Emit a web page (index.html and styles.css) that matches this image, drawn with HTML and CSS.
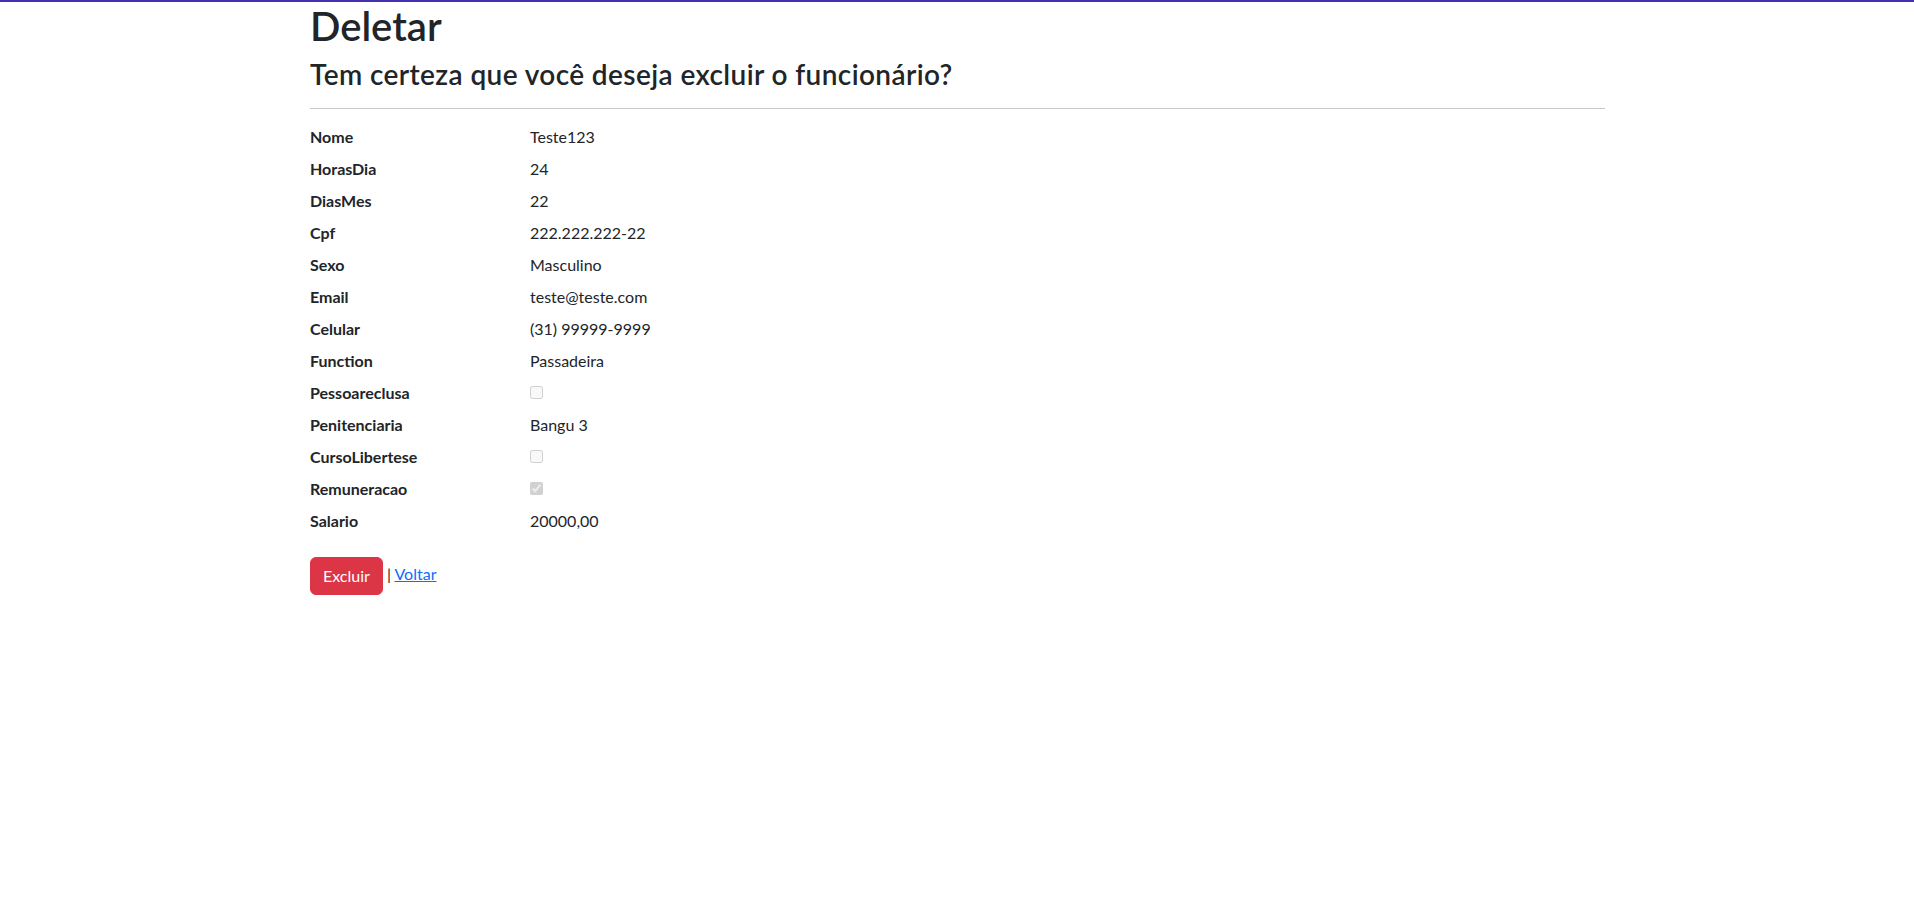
FILE: index.html
```html
<!DOCTYPE html>
<html lang="pt-br">
<head>
<meta charset="utf-8">
<title>Deletar</title>
<link rel="stylesheet" href="styles.css">
</head>
<body>
<div class="topline"></div>
<div class="container">
  <main class="main">
    <h1 class="title">Deletar</h1>
    <h3 class="subtitle">Tem certeza que você deseja excluir o funcionário?</h3>
    <div>
      <hr class="divider">
      <dl class="details">
        <dt>Nome</dt><dd>Teste123</dd>
        <dt>HorasDia</dt><dd>24</dd>
        <dt>DiasMes</dt><dd>22</dd>
        <dt>Cpf</dt><dd>222.222.222-22</dd>
        <dt>Sexo</dt><dd>Masculino</dd>
        <dt>Email</dt><dd>teste@teste.com</dd>
        <dt>Celular</dt><dd>(31) 99999-9999</dd>
        <dt>Function</dt><dd>Passadeira</dd>
        <dt>Pessoareclusa</dt><dd><input class="check-box" type="checkbox" disabled></dd>
        <dt>Penitenciaria</dt><dd>Bangu 3</dd>
        <dt>CursoLibertese</dt><dd><input class="check-box" type="checkbox" disabled></dd>
        <dt>Remuneracao</dt><dd><input class="check-box" type="checkbox" disabled checked></dd>
        <dt>Salario</dt><dd>20000,00</dd>
      </dl>
      <form class="actions">
        <button type="button" class="btn-danger">Excluir</button> | <a href="#" class="link">Voltar</a>
      </form>
    </div>
  </main>
</div>
</body>
</html>
```
FILE: styles.css
```css
* { box-sizing: border-box; }
html { font-size: 16px; }
body {
  margin: 0;
  font-family: Lato, "Noto Sans", "Liberation Sans", sans-serif;
  font-size: 16px;
  line-height: 1.5;
  color: #212529;
  background: #fff;
}
.topline {
  height: 2px;
  background: #4531b4;
}
.container {
  max-width: 1320px;
  margin: 0 auto;
  padding: 0 12px 0 13px;
}
.main { padding-bottom: 16px; }
.title {
  margin: 0 0 8px;
  font-size: 40px;
  font-weight: 600;
  line-height: 1.2;
}
.subtitle {
  margin: 0 0 8px;
  font-size: 28px;
  font-weight: 600;
  line-height: 1.2;
  letter-spacing: 0.4px;
}
.divider {
  margin: 16px 0;
  border: 0;
  border-top: 1px solid #c8c8c8;
  height: 0;
}
.details {
  display: grid;
  grid-template-columns: 220px 1fr;
  margin: 0 0 16px;
}
.details dt {
  font-weight: 700;
  margin: 0 0 8px;
}
.details dd {
  margin: 0 0 8px;
  display: flex;
  align-items: center;
  height: 24px;
}
.check-box {
  width: 13px;
  height: 13px;
  margin: 3px 3px 3px 0;
}
.actions { margin: 0; }
.btn-danger {
  font-family: inherit;
  font-size: 16px;
  line-height: 24px;
  padding: 6px 12px;
  border: 1px solid #dc3545;
  border-radius: 6px;
  background: #dc3545;
  color: #fff;
  cursor: pointer;
  vertical-align: middle;
}
.link { color: #0d6efd; text-decoration: underline; }
```
